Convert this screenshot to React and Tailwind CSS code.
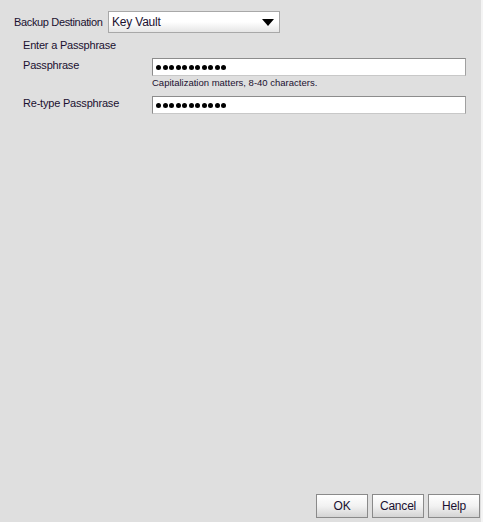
import React from "react";

const font = { fontFamily: '"Liberation Sans", Arial, sans-serif' };

function Dots({ count }) {
  return (
    <div className="flex items-center gap-[1.5px] pl-[3px]">
      {Array.from({ length: count }).map((_, i) => (
        <span key={i} className="block h-[5px] w-[5px] rounded-full bg-black" />
      ))}
    </div>
  );
}

function PasswordField({ count }) {
  return (
    <div className="flex h-[18px] w-[314px] items-center border border-[#8c8c8c] border-b-[#c8c8c8] border-r-[#a0a0a0] bg-white">
      <Dots count={count} />
    </div>
  );
}

function DialogButton({ children }) {
  return (
    <button className="h-[24px] w-[52px] border border-[#8a8a8a] bg-gradient-to-b from-white via-[#f2f2f2] to-[#d4d4d4] text-[12px] text-[#1a1030]">
      {children}
    </button>
  );
}

export default function App() {
  return (
    <div
      className="flex h-[522px] w-[483px] flex-col border-r-2 border-r-[#f4f4f4] bg-[#dfdfdf] text-[11px] tracking-[-0.2px] text-[#1a1030]"
      style={font}
    >
      <div className="flex items-center pl-[14px] pt-[11px]">
        <span className="w-[94px] whitespace-nowrap tracking-[-0.35px]">Backup Destination</span>
        <div className="flex h-[22px] w-[172px] items-center justify-between border border-[#a8a8a8] bg-gradient-to-b from-white via-white to-[#e6e6e6] pl-[3px] pr-[5px]">
          <span className="text-[12px]">Key Vault</span>
          <svg width="12" height="7" viewBox="0 0 12 7">
            <path d="M0 0 H12 L6 7 Z" fill="#000" />
          </svg>
        </div>
      </div>

      <div className="pl-[23px] pt-[6px] leading-[13px]">Enter a Passphrase</div>

      <div className="flex items-start pl-[23px] pt-[6px]">
        <span className="w-[129px] pt-[1px] leading-[13px]">Passphrase</span>
        <div className="flex flex-col">
          <PasswordField count={11} />
          <span className="pt-[1px] text-[9.5px] leading-[12px] tracking-[0px]">Capitalization matters, 8-40 characters.</span>
        </div>
      </div>

      <div className="flex items-start pl-[23px] pt-[7px]">
        <span className="w-[129px] pt-[1px] leading-[13px]">Re-type Passphrase</span>
        <PasswordField count={11} />
      </div>

      <div className="mt-auto flex justify-end gap-[4px] pb-[4px] pr-[1px]">
        <DialogButton>OK</DialogButton>
        <DialogButton>Cancel</DialogButton>
        <DialogButton>Help</DialogButton>
      </div>
    </div>
  );
}
